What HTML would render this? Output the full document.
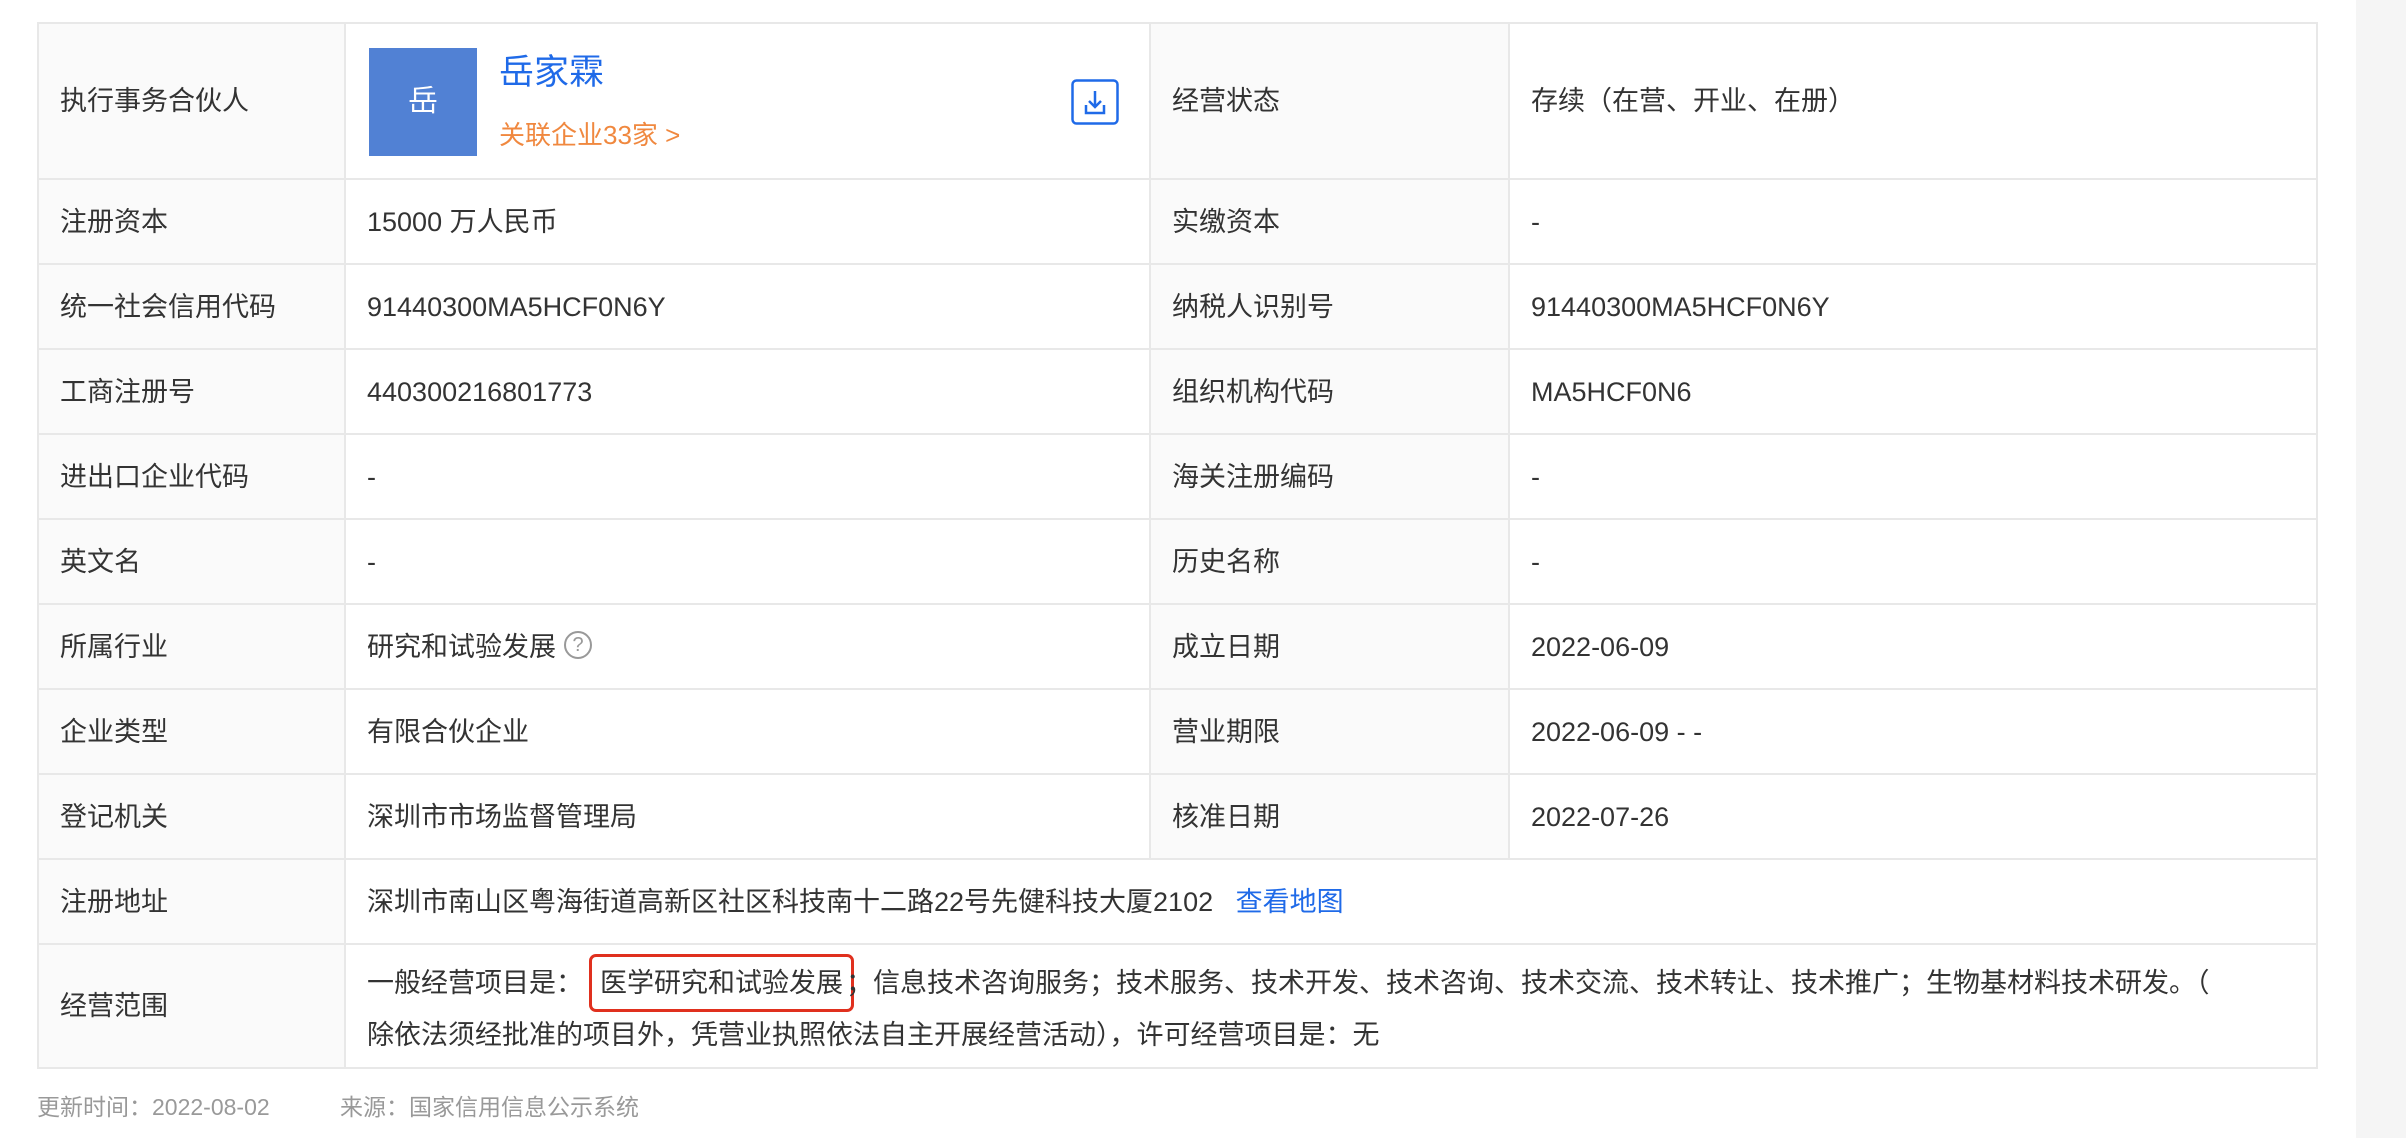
<!DOCTYPE html>
<html><head><meta charset="utf-8"><style>
*{margin:0;padding:0;box-sizing:border-box}
body{width:2406px;height:1138px;background:#fff;position:relative;overflow:hidden;font-family:"Liberation Sans","Noto Sans CJK SC",sans-serif;color:#333;font-size:27px}
.strip{position:absolute;left:2356px;top:0;width:50px;height:1138px;background:#f5f5f5}
table{position:absolute;left:37px;top:22px;width:2279px;border-collapse:collapse;table-layout:fixed}
td{border:2px solid #e8e8e8;padding:0 0 0 21px;vertical-align:middle;line-height:36px}
td.l{background:#fafafa}
tr{height:85px}
.blue{color:#1f6ae8}
.q{display:inline-block;width:28px;height:28px;border:2px solid #999;border-radius:50%;color:#999;font-size:20px;line-height:24px;text-align:center;vertical-align:middle;margin-left:8px;position:relative;top:-3px}
.foot{position:absolute;top:1088px;font-size:23px;color:#999}
.hl{display:inline-block;border:3px solid #e0301e;border-radius:7px;padding:2px 8px;line-height:48px;margin:0 -8px 0 6px}
</style></head><body>
<div class="strip"></div>
<table>
<colgroup><col style="width:307px"><col style="width:805px"><col style="width:359px"><col style="width:808px"></colgroup>
<tr style="height:156px"><td class="l">执行事务合伙人</td><td style="position:relative">
<div style="position:absolute;left:23px;top:24px;width:108px;height:108px;background:#5181d4;color:#fff;font-size:30px;line-height:108px;text-align:center">岳</div>
<div style="position:absolute;left:153px;top:28px;font-size:35px;line-height:42px;color:#1f6ae8">岳家霖</div>
<div style="position:absolute;left:153px;top:94px;font-size:26px;line-height:34px;color:#f0883f">关联企业33家 &gt;</div>
<svg style="position:absolute;left:725px;top:55px" width="48" height="46" viewBox="0 0 48 46"><rect x="1.5" y="1.5" width="45" height="43" rx="4" fill="none" stroke="#1f6ae8" stroke-width="2.5"/><path d="M24 12v16M18 22l6 6 6-6M15 26v8h18v-8" fill="none" stroke="#1f6ae8" stroke-width="2.5"/></svg>
</td><td class="l">经营状态</td><td>存续（在营、开业、在册）</td></tr>
<tr><td class="l">注册资本</td><td>15000 万人民币</td><td class="l">实缴资本</td><td>-</td></tr>
<tr><td class="l">统一社会信用代码</td><td>91440300MA5HCF0N6Y</td><td class="l">纳税人识别号</td><td>91440300MA5HCF0N6Y</td></tr>
<tr><td class="l">工商注册号</td><td>440300216801773</td><td class="l">组织机构代码</td><td>MA5HCF0N6</td></tr>
<tr><td class="l">进出口企业代码</td><td>-</td><td class="l">海关注册编码</td><td>-</td></tr>
<tr><td class="l">英文名</td><td>-</td><td class="l">历史名称</td><td>-</td></tr>
<tr><td class="l">所属行业</td><td>研究和试验发展<span class="q">?</span></td><td class="l">成立日期</td><td>2022-06-09</td></tr>
<tr><td class="l">企业类型</td><td>有限合伙企业</td><td class="l">营业期限</td><td>2022-06-09 - -</td></tr>
<tr><td class="l">登记机关</td><td>深圳市市场监督管理局</td><td class="l">核准日期</td><td>2022-07-26</td></tr>
<tr><td class="l">注册地址</td><td colspan="3">深圳市南山区粤海街道高新区社区科技南十二路22号先健科技大厦2102&nbsp;&nbsp;&nbsp;<span class="blue">查看地图</span></td></tr>
<tr style="height:124px"><td class="l">经营范围</td><td colspan="3" style="line-height:46px;padding-right:30px">一般经营项目是：<span class="hl">医学研究和试验发展</span>；信息技术咨询服务；技术服务、技术开发、技术咨询、技术交流、技术转让、技术推广；生物基材料技术研发。（<br>除依法须经批准的项目外，凭营业执照依法自主开展经营活动），许可经营项目是：无</td></tr>
</table>
<div class="foot" style="left:37px">更新时间：2022-08-02</div>
<div class="foot" style="left:340px">来源：国家信用信息公示系统</div>
</body></html>
